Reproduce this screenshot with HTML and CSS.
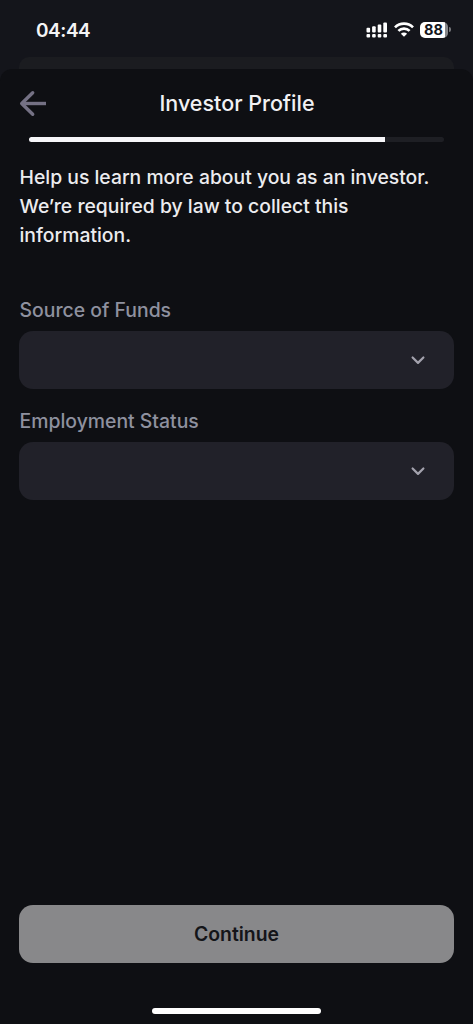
FILE: index.html
```
<!DOCTYPE html>
<html lang="en">
<head>
<meta charset="utf-8">
<title>Investor Profile</title>
<link rel="stylesheet" href="styles.css">
</head>
<body>
<div class="screen">
  <div class="status">
    <span class="time">04:44</span>
    <div class="indicators">
      <svg class="signal" width="22" height="16" viewBox="0 0 22 16" fill="#fff">
        <rect x="0.5" y="5.8" width="3.6" height="4.7" rx="1"/>
        <rect x="6.1" y="4.2" width="3.6" height="6.3" rx="1"/>
        <rect x="11.7" y="2.5" width="3.6" height="8" rx="1"/>
        <rect x="17.3" y="0.5" width="3.7" height="10" rx="1"/>
        <rect x="0.5" y="12" width="3.6" height="3.6" rx="1"/>
        <rect x="6.1" y="12" width="3.6" height="3.6" rx="1"/>
        <rect x="11.7" y="12" width="3.6" height="3.6" rx="1"/>
        <rect x="17.3" y="12" width="3.7" height="3.6" rx="1"/>
      </svg>
      <svg class="wifi" width="20" height="15" viewBox="0 0 20 15" fill="none" stroke="#fff" stroke-width="2.7">
        <path d="M1 5.4a12.8 12.8 0 0 1 18 0"/>
        <path d="M4.4 8.9a8 8 0 0 1 11.2 0"/>
        <path d="M10 14.8l-3.1-3.1a4.4 4.4 0 0 1 6.2 0z" fill="#fff" stroke="none"/>
      </svg>
      <div class="battery"><span class="level">88</span></div>
      <span class="terminal"></span>
    </div>
  </div>
  <div class="behind"></div>
  <main class="sheet">
    <header class="header">
      <svg class="back" width="28" height="28" viewBox="0 0 28 28" fill="none" stroke="#747184" stroke-width="3.4" stroke-linejoin="round">
        <path d="M27 14.5H3"/>
        <path d="M13.7 3.7L2.7 14.5l11 10.8" stroke-linecap="round"/>
      </svg>
      <h1 class="title">Investor Profile</h1>
    </header>
    <div class="progress"><div class="fill"></div></div>
    <p class="intro">Help us learn more about you as an investor.<br>We’re required by law to collect this<br>information.</p>
    <div class="field">
      <span class="label">Source of Funds</span>
      <div class="select"><svg width="16" height="10" viewBox="0 0 16 10" fill="none" stroke="#a3a2ad" stroke-width="2.2" stroke-linecap="round" stroke-linejoin="round"><path d="M2.6 2.5L8 7.9 13.4 2.5"/></svg></div>
    </div>
    <div class="field">
      <span class="label">Employment Status</span>
      <div class="select"><svg width="16" height="10" viewBox="0 0 16 10" fill="none" stroke="#a3a2ad" stroke-width="2.2" stroke-linecap="round" stroke-linejoin="round"><path d="M2.6 2.5L8 7.9 13.4 2.5"/></svg></div>
    </div>
    <button class="continue">Continue</button>
    <div class="home"></div>
  </main>
</div>
</body>
</html>
```
FILE: styles.css
```
* { box-sizing: border-box; }
body { margin: 0; background: #14151b; font-family: Inter, "Liberation Sans", sans-serif; }
.screen { width: 473px; height: 1024px; overflow: hidden; display: flex; flex-direction: column; }
.status { height: 57px; flex: none; display: flex; justify-content: space-between; padding: 18px 22px 0 36px; }
.time { font-size: 19px; line-height: 25px; letter-spacing: -0.45px; font-weight: 600; color: #f4f4f6; }
.indicators { display: flex; align-items: flex-start; padding-top: 4px; }
.signal { margin-right: 6px; }
.wifi { margin-right: 6px; }
.battery { width: 28px; height: 16px; border-radius: 5px; background: linear-gradient(to right, #fff 25px, #85868a 25px); }
.level { display: block; width: 27px; text-align: center; font-size: 14.5px; line-height: 16px; font-weight: 700; color: #14151b; }
.terminal { width: 2px; height: 5px; margin: 5px 0 0 1px; border-radius: 0 2px 2px 0; background: #77787c; }
.behind { height: 12px; flex: none; margin: 0 19px; background: #1b1c20; border-radius: 10px 10px 0 0; }
.sheet { flex: 1; display: flex; flex-direction: column; background: #0e0f13; border-radius: 12px 12px 0 0; padding: 0 19px 10px; }
.header { height: 68px; display: grid; grid-template-columns: 40px 1fr 40px; align-items: center; }
.title { margin: 0; padding-left: 1px; font-size: 21.5px; line-height: 28px; font-weight: 500; color: #f1f1f4; text-align: center; white-space: nowrap; }
.progress { height: 5px; margin: 0 10px; border-radius: 3px; background: #1e1f24; }
.fill { width: 355.5px; height: 5px; border-radius: 3px 0 0 3px; background: #f6f6f9; }
.intro { margin: 21px 0 45px; padding-left: 0.5px; font-size: 19.35px; line-height: 29px; font-weight: 500; color: #ececef; white-space: nowrap; }
.field { height: 111px; }
.label { display: block; height: 36px; padding: 1px 0 0 0.5px; font-size: 19.4px; line-height: 28px; font-weight: 500; color: #8e919f; }
.select { height: 58px; border-radius: 14px; background: #212129; display: flex; justify-content: flex-end; align-items: center; padding-right: 28px; }
.continue { height: 58px; flex: none; margin: auto 0 45px; border: 0; border-radius: 14px; background: #88888a; font: 600 19.4px/28px Inter, "Liberation Sans", sans-serif; color: #141519; }
.home { width: 169px; height: 6px; flex: none; align-self: center; border-radius: 3px; background: #fff; }
```
